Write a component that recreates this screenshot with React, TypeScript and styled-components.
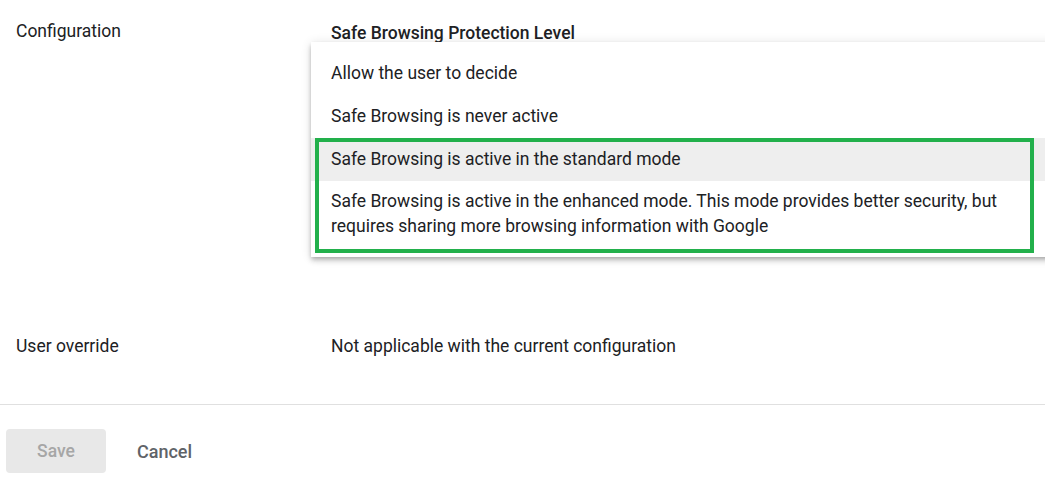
import React from "react";
import styled, { createGlobalStyle } from "styled-components";

const Global = createGlobalStyle`
  html, body { margin: 0; padding: 0; overflow: hidden; background: #fff; }
  body { font-family: Roboto, "Liberation Sans", sans-serif; color: #202124; }
`;

const Page = styled.div`
  width: 1045px;
  height: 491px;
  display: flex;
  flex-direction: column;
`;

const Row = styled.div<{ $h: number; $pt: number }>`
  display: grid;
  grid-template-columns: 315px 1fr;
  padding: ${(p) => p.$pt}px 0 0 16px;
  height: ${(p) => p.$h}px;
  box-sizing: border-box;
`;

const Label = styled.div`
  font-size: 17.5px;
  line-height: 24px;
  color: #202124;
`;

const Value = styled.div`
  font-size: 17.5px;
  line-height: 24px;
  color: #202124;
`;

const ValueColumn = styled.div`
  padding-top: 2px;
`;

const FieldTitle = styled.div`
  font-size: 17.5px;
  line-height: 24px;
  font-weight: 500;
  color: #202124;
`;

const Anchor = styled.div`
  position: relative;
`;

const Menu = styled.div`
  position: absolute;
  left: -20px;
  top: -3px;
  width: 780px;
  background: #fff;
  padding: 10px 0 8px;
  box-shadow: 0 2px 4px -1px rgba(0, 0, 0, 0.2), 0 4px 5px 0 rgba(0, 0, 0, 0.14),
    0 1px 10px 0 rgba(0, 0, 0, 0.12);
  z-index: 2;
`;

const Item = styled.div<{ $active?: boolean; $pt?: number }>`
  padding: ${(p) => p.$pt ?? 9}px 20px 10px;
  font-size: 17.5px;
  line-height: 24px;
  color: #202124;
  background: ${(p) => (p.$active ? "#eeeeee" : "#fff")};
`;

const TextBlock = styled.div`
  max-width: 690px;
  line-height: 25px;
`;

const Highlight = styled.div`
  position: absolute;
  left: 4px;
  top: 96px;
  width: 719px;
  height: 115px;
  box-sizing: border-box;
  border: 4px solid #22b04b;
  pointer-events: none;
`;

const Divider = styled.hr`
  margin: 0;
  border: 0;
  border-top: 1px solid #e0e0e0;
`;

const Footer = styled.div`
  display: flex;
  align-items: center;
  gap: 31px;
  padding: 24px 0 0 6px;
`;

const SaveButton = styled.button`
  width: 100px;
  height: 44px;
  border: 0;
  border-radius: 4px;
  background: #e8e8e8;
  color: #a6a6a6;
  font-family: Roboto, "Liberation Sans", sans-serif;
  font-size: 17.5px;
  font-weight: 500;
`;

const CancelButton = styled.button`
  border: 0;
  background: transparent;
  padding: 0;
  color: #5f6368;
  font-family: Roboto, "Liberation Sans", sans-serif;
  font-size: 18px;
  font-weight: 500;
`;

export default function App() {
  return (
    <Page>
      <Global />
      <Row $h={322} $pt={19}>
        <Label>Configuration</Label>
        <ValueColumn>
          <FieldTitle>Safe Browsing Protection Level</FieldTitle>
          <Anchor>
            <Menu>
              <Item>Allow the user to decide</Item>
              <Item>Safe Browsing is never active</Item>
              <Item $active>Safe Browsing is active in the standard mode</Item>
              <Item $pt={8}>
                <TextBlock>
                  Safe Browsing is active in the enhanced mode. This mode provides better
                  security, but requires sharing more browsing information with Google
                </TextBlock>
              </Item>
              <Highlight />
            </Menu>
          </Anchor>
        </ValueColumn>
      </Row>
      <Row $h={82} $pt={12}>
        <Label>User override</Label>
        <Value>Not applicable with the current configuration</Value>
      </Row>
      <Divider />
      <Footer>
        <SaveButton disabled>Save</SaveButton>
        <CancelButton>Cancel</CancelButton>
      </Footer>
    </Page>
  );
}
